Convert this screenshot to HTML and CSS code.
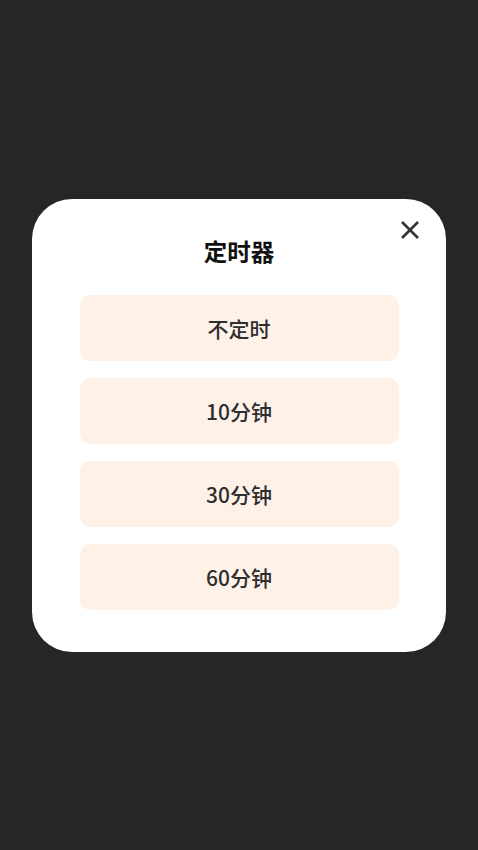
FILE: index.html
```html
<!DOCTYPE html>
<html lang="zh-CN">
<head>
<meta charset="utf-8">
<link rel="stylesheet" href="styles.css">
</head>
<body>
<div class="screen">
  <div class="modal">
    <button class="close" aria-label="关闭">
      <svg width="20" height="20" viewBox="0 0 20 20"><path d="M2 2 L18 18 M18 2 L2 18" stroke="#333" stroke-width="2.6" stroke-linecap="butt" fill="none"/></svg>
    </button>
    <div class="title">定时器</div>
    <div class="options">
      <div class="option">不定时</div>
      <div class="option">10分钟</div>
      <div class="option">30分钟</div>
      <div class="option">60分钟</div>
    </div>
  </div>
</div>
</body>
</html>
```
FILE: styles.css
```css
html, body {
  margin: 0;
  padding: 0;
  background: #262626;
}
.screen {
  width: 478px;
  height: 850px;
  display: flex;
  justify-content: center;
  padding-top: 199px;
  box-sizing: border-box;
  font-family: "Noto Sans CJK SC", "Noto Sans", sans-serif;
}
.modal {
  position: relative;
  width: 414px;
  height: 453px;
  background: #fff;
  border-radius: 40px;
  box-sizing: border-box;
  padding-top: 34px;
  display: flex;
  flex-direction: column;
  align-items: center;
}
.close {
  position: absolute;
  top: 21px;
  right: 26px;
  width: 20px;
  height: 20px;
  padding: 0;
  border: 0;
  background: none;
  display: flex;
}
.title {
  font-size: 23.5px;
  font-weight: 700;
  color: #111;
  line-height: 36px;
  height: 36px;
}
.options {
  margin-top: 26px;
  display: flex;
  flex-direction: column;
  gap: 17px;
}
.option {
  width: 319px;
  height: 66px;
  border-radius: 10px;
  background: #fdf1e8;
  color: #2e2e2e;
  font-size: 21px;
  font-weight: 500;
  display: flex;
  align-items: center;
  justify-content: center;
}
```
